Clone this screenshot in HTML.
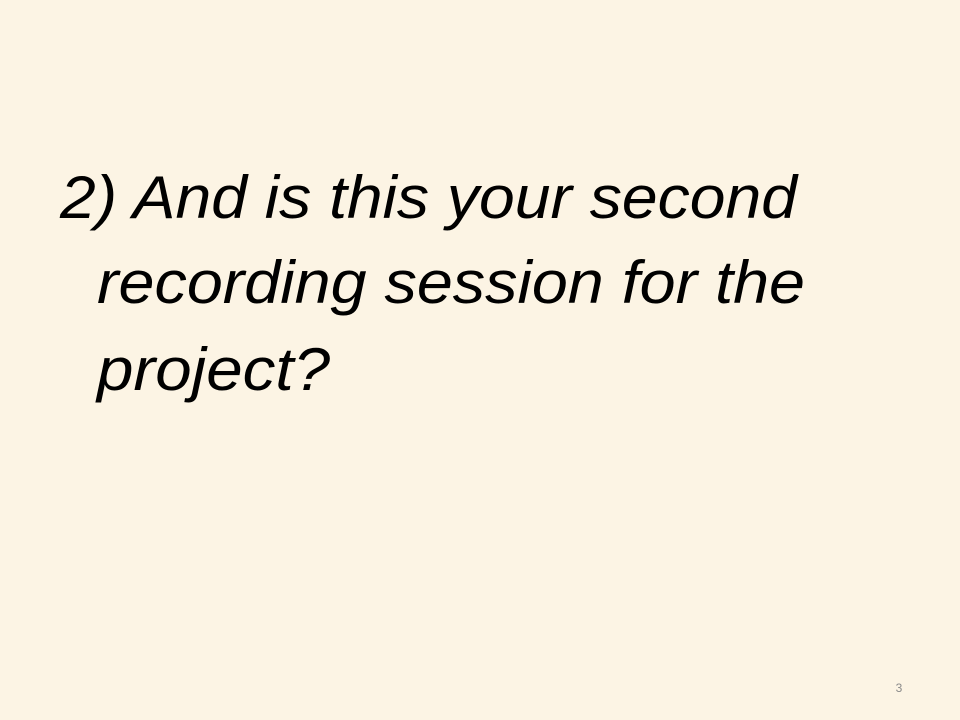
<!DOCTYPE html>
<html><head><style>
html,body{margin:0;padding:0;background:#FCF4E4;}
svg{display:block}
</style></head><body>
<svg width="960" height="720" xmlns="http://www.w3.org/2000/svg">
<rect width="960" height="720" fill="#FCF4E4"/>
<g font-family="Liberation Sans, sans-serif" font-style="italic" font-size="60" fill="#000">
<text x="60" y="218" textLength="737" lengthAdjust="spacingAndGlyphs">2) And is this your second</text>
<text x="97" y="303" textLength="708" lengthAdjust="spacingAndGlyphs">recording session for the</text>
<text x="97" y="390" textLength="233" lengthAdjust="spacingAndGlyphs">project?</text>
</g>
<text x="899" y="692" font-family="Liberation Sans, sans-serif" font-size="12" fill="#8a8a8a" text-anchor="middle">3</text>
</svg>
</body></html>
